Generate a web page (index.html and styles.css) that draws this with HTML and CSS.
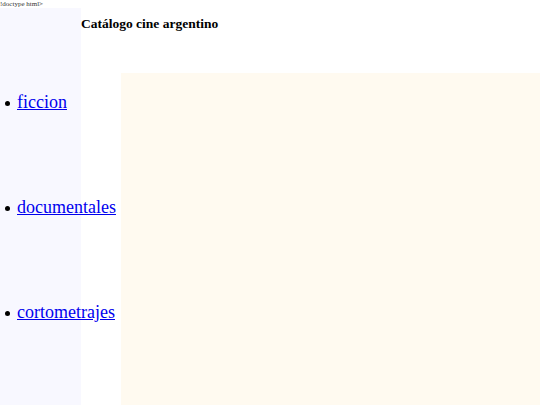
FILE: index.html
```html
<!DOCTYPE html>
<html>
<head>
  <meta charset="utf-8">
  <link rel="stylesheet" href="styles.css">
</head>
<body>
  <div class="stray">!doctype html&gt;</div>
  <div class="page">
    <nav class="sidebar">
      <ul class="menu">
        <li><a href="#">ficcion</a></li>
        <li><a href="#">documentales</a></li>
        <li><a href="#">cortometrajes</a></li>
      </ul>
    </nav>
    <div class="main">
      <h1 class="title">Catálogo cine argentino</h1>
      <section class="content"></section>
    </div>
  </div>
</body>
</html>
```

FILE: styles.css
```css
body {
  margin: 0;
  font-family: "Liberation Serif", "Times New Roman", serif;
  color: #000;
  background: #fff;
}

.stray {
  font-size: 7px;
  line-height: 8px;
  height: 8px;
  color: #333;
}

.page {
  display: flex;
  height: calc(100vh - 8px);
}

.sidebar {
  position: relative;
  z-index: 1;
  width: 15%;
  flex: none;
  background: ghostwhite;
}

.menu {
  margin: 0;
  padding: 84px 0 0 5px;
  font-size: 18px;
  line-height: 21px;
  list-style: none;
}

.menu li {
  margin-bottom: 84px;
  white-space: nowrap;
}

/* disc bullet, the glyph one came out too small */
.menu li::before {
  content: "";
  display: inline-block;
  width: 5px;
  height: 5px;
  margin-right: 7px;
  border-radius: 50%;
  background: #000;
  vertical-align: middle;
}

.menu a {
  color: #0000ee;
}

.main {
  flex: 1;
  display: flex;
  flex-direction: column;
  min-width: 0;
}

.title {
  margin: 8px 0 0;
  font-size: 13.5px;
  line-height: 16px;
  font-weight: bold;
}

.content {
  flex: 1;
  margin: 41px 0 0 40px;
  background: floralwhite;
}
```
